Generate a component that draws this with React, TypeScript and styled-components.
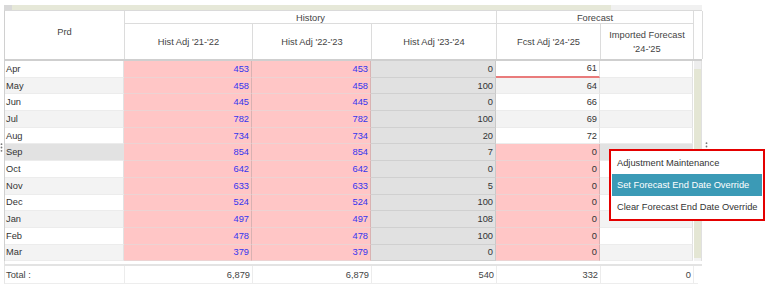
import styled, { createGlobalStyle } from "styled-components";

const GlobalStyle = createGlobalStyle`
  html, body {
    margin: 0;
    padding: 0;
    background: #fff;
  }
  body {
    font-family: "Liberation Sans", Arial, sans-serif;
    font-size: 9.3px;
    color: #333;
  }
`;

const cols = "120px 128px 119px 125px 104px 93px";

type Row = [string, number, number, number, number];

const rows: Row[] = [
  ["Apr", 453, 453, 0, 61],
  ["May", 458, 458, 100, 64],
  ["Jun", 445, 445, 0, 66],
  ["Jul", 782, 782, 100, 69],
  ["Aug", 734, 734, 20, 72],
  ["Sep", 854, 854, 7, 0],
  ["Oct", 642, 642, 0, 0],
  ["Nov", 633, 633, 5, 0],
  ["Dec", 524, 524, 100, 0],
  ["Jan", 497, 497, 108, 0],
  ["Feb", 478, 478, 100, 0],
  ["Mar", 379, 379, 0, 0],
];

const totals = ["6,879", "6,879", "540", "332", "0"];

const menuItems = [
  "Adjustment Maintenance",
  "Set Forecast End Date Override",
  "Clear Forecast End Date Override",
];

const GripIcon = ({ left, top }: { left: number; top: number }) => (
  <Grip $left={left} $top={top} width="3" height="9" viewBox="0 0 3 9">
    <circle cx="1.5" cy="1.2" r="0.9" fill="#777" />
    <circle cx="1.5" cy="4.5" r="0.9" fill="#777" />
    <circle cx="1.5" cy="7.8" r="0.9" fill="#777" />
  </Grip>
);

const App = () => {
  return (
    <Page>
      <GlobalStyle />
      <Frame>
        <TopScroll>
          <ScrollBtn />
          <ScrollThumb />
          <ScrollRest />
        </TopScroll>

        <Header>
          <HeadCell $span="1 / 3" $col="1" $top>Prd</HeadCell>
          <HeadCell $span="1" $col="2 / 5" $group>History</HeadCell>
          <HeadCell $span="1" $col="5 / 7" $group>Forecast</HeadCell>
          <HeadCell $span="1 / 3" $col="7" />
          <HeadCell $span="2" $col="2">Hist Adj '21-'22</HeadCell>
          <HeadCell $span="2" $col="3">Hist Adj '22-'23</HeadCell>
          <HeadCell $span="2" $col="4">Hist Adj '23-'24</HeadCell>
          <HeadCell $span="2" $col="5">Fcst Adj '24-'25</HeadCell>
          <HeadCell $span="2" $col="6">Imported Forecast '24-'25</HeadCell>
        </Header>

        <Body>
          <Rows>
            {rows.map((r, i) => {
              const alt = i % 2 === 1;
              const hover = r[0] === "Sep";
              return (
                <DataRow key={r[0]}>
                  <Cell $tone={hover ? "hover" : "plain"} $alt={alt}>{r[0]}</Cell>
                  <Cell $tone="pink" $right $blue>{r[1]}</Cell>
                  <Cell $tone="pink" $right $blue>{r[2]}</Cell>
                  <Cell $tone="gray" $right>{r[3]}</Cell>
                  <Cell $tone={i >= 5 ? "pink" : "plain"} $alt={alt} $right $mark={i === 0}>
                    {r[4]}
                  </Cell>
                  <Cell $tone={hover ? "hover" : "plain"} $alt={alt} />
                </DataRow>
              );
            })}
          </Rows>
          <VScroll>
            <VArrow />
            <VThumb />
          </VScroll>
        </Body>

        <Gap />

        <TotalRow>
          <TotalCell>Total :</TotalCell>
          {totals.map((t, i) => (
            <TotalCell key={i} $right>{t}</TotalCell>
          ))}
        </TotalRow>
      </Frame>

      <GripIcon left={0} top={143} />
      <GripIcon left={705} top={142} />

      <Menu>
        {menuItems.map((m, i) => (
          <MenuItem key={m} $active={i === 1}>{m}</MenuItem>
        ))}
      </Menu>
    </Page>
  );
};

export default App;

const Page = styled.div`
  position: relative;
  width: 767px;
  height: 289px;
  overflow: hidden;
  background: #fff;
`;

const Frame = styled.div`
  width: 698px;
  margin-left: 4px;
  padding-top: 5px;
`;

const TopScroll = styled.div`
  display: flex;
  height: 5px;
`;

const ScrollBtn = styled.div`
  width: 8px;
  background: #d9d9d9;
`;

const ScrollThumb = styled.div`
  width: 599px;
  background: #e6e8d8;
`;

const ScrollRest = styled.div`
  flex: 1;
  background: #f1f1f1;
`;

const Header = styled.div`
  display: grid;
  grid-template-columns: ${cols} 8px;
  grid-template-rows: 13px 35px;
  border-top: 1px solid #dadada;
  border-left: 1px solid #d0d0d0;
  border-bottom: 2px solid #cfcfcf;
  color: #444;
`;

const HeadCell = styled.div<{ $span: string; $col: string; $group?: boolean; $top?: boolean }>`
  grid-row: ${(p) => p.$span};
  grid-column: ${(p) => p.$col};
  display: flex;
  align-items: ${(p) => (p.$group ? "flex-start" : "center")};
  justify-content: center;
  text-align: center;
  line-height: 14px;
  padding: ${(p) => (p.$top ? "0 0 6px" : p.$group ? "0" : "0 4px")};
  border-right: 1px solid #dcdcdc;
  border-bottom: ${(p) => (p.$group ? "1px solid #dcdcdc" : "none")};
  box-sizing: border-box;
  background: #fff;
`;

const Body = styled.div`
  display: flex;
`;

const Rows = styled.div`
  width: 694px;
  border-left: 1px solid #d0d0d0;
  box-sizing: border-box;
`;

const DataRow = styled.div`
  display: grid;
  grid-template-columns: 119px 128px 119px 125px 104px 93px;
  height: 16.7px;
`;

const tones = {
  plain: "#fff",
  pink: "#ffc6c6",
  gray: "#e1e1e1",
  hover: "#e2e2e2",
};

const Cell = styled.div<{
  $tone: "plain" | "pink" | "gray" | "hover";
  $alt?: boolean;
  $right?: boolean;
  $blue?: boolean;
  $mark?: boolean;
}>`
  display: flex;
  align-items: center;
  justify-content: ${(p) => (p.$right ? "flex-end" : "flex-start")};
  padding: 0 2px 0 1px;
  box-sizing: border-box;
  overflow: hidden;
  white-space: nowrap;
  color: ${(p) => (p.$blue ? "#3434ee" : "#333")};
  background: ${(p) => (p.$tone === "plain" && p.$alt ? "#f3f3f3" : tones[p.$tone])};
  border-right: 1px solid
    ${(p) => (p.$tone === "pink" ? "#d9b2b2" : p.$tone === "gray" ? "#c9c9c9" : "#e2e2e2")};
  border-bottom: ${(p) =>
    p.$mark
      ? "2px solid #e97b7b"
      : `1px solid ${p.$tone === "pink" ? "#ecd3d3" : p.$tone === "gray" ? "#d0d0d0" : "#ececec"}`};
`;

const VScroll = styled.div`
  width: 8px;
  display: flex;
  flex-direction: column;
  background: #f2f2f2;
  border-right: 1px solid #e0e0e0;
  box-sizing: border-box;
`;

const VArrow = styled.div`
  height: 8px;
  background: #ededed;
`;

const VThumb = styled.div`
  flex: 1;
  margin-bottom: 3px;
  background: #e4e6d4;
`;

const Gap = styled.div`
  height: 3px;
  border-bottom: 2px solid #e3e3e3;
  border-left: 1px solid #e3e3e3;
`;

const TotalRow = styled.div`
  display: grid;
  grid-template-columns: ${cols};
  height: 18px;
  border-bottom: 1px solid #ededed;
  border-left: 1px solid #e6e6e6;
  width: 694px;
  box-sizing: border-box;
`;

const TotalCell = styled.div<{ $right?: boolean }>`
  display: flex;
  align-items: center;
  justify-content: ${(p) => (p.$right ? "flex-end" : "flex-start")};
  padding: 0 2px 0 1px;
  border-right: 1px solid #ececec;
  color: #444;
`;

const Grip = styled.svg<{ $left: number; $top: number }>`
  position: absolute;
  left: ${(p) => p.$left}px;
  top: ${(p) => p.$top}px;
  display: block;
`;

const Menu = styled.div`
  position: absolute;
  left: 609px;
  top: 149px;
  width: 156px;
  padding: 1px;
  border: 2px solid #e40000;
  box-sizing: border-box;
  background: #fff;
`;

const MenuItem = styled.div<{ $active?: boolean }>`
  height: 22px;
  display: flex;
  align-items: center;
  padding-left: 5px;
  white-space: nowrap;
  color: ${(p) => (p.$active ? "#fff" : "#333")};
  background: ${(p) => (p.$active ? "#3b9ab6" : "transparent")};
`;
